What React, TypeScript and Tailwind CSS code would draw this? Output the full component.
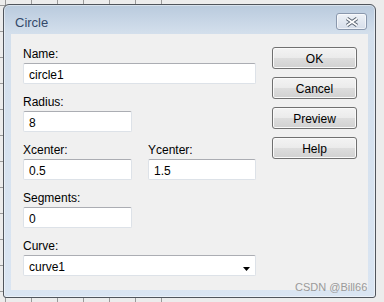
import React from "react";

function TextBox({ value, className }: { value: string; className: string }) {
  return (
    <div
      className={
        "h-[21px] border border-[#dde2e8] border-t-[#abadb3] bg-white rounded-[2px] pl-[5px] pt-[4px] text-[12px] leading-[14px] text-black " +
        className
      }
    >
      {value}
    </div>
  );
}

function Label({ text }: { text: string }) {
  return <div className="h-[14px] text-[12px] leading-[14px] text-black">{text}</div>;
}

function Btn({ text }: { text: string }) {
  return (
    <div className="h-[22px] w-[85px] rounded-[3px] border border-[#707070] bg-[linear-gradient(to_bottom,#f3f3f3_0%,#ebebeb_48%,#dddddd_52%,#d1d1d1_100%)] shadow-[inset_0_0_0_1px_#fafafa] pt-[4px] text-center text-[12px] leading-[14px] text-black">
      {text}
    </div>
  );
}

export default function App() {
  return (
    <div className="relative w-[384px] h-[302px] overflow-hidden bg-[#ececec] pl-[3px] pt-[4px] font-['Liberation_Sans',Arial,sans-serif]">
      <div className="absolute left-0 top-0 h-full w-[172px] bg-[image:linear-gradient(to_right,#9a9a9a_1px,transparent_1px)] bg-[size:26px_26px] bg-[position:5px_0px]" />
      <div className="absolute left-0 top-0 h-full w-[172px] bg-[image:linear-gradient(to_bottom,#9a9a9a_1px,transparent_1px)] bg-[size:26px_26px] bg-[position:0px_5px]" />

      <div className="relative flex h-[294px] w-[373px] flex-col rounded-t-[6px] rounded-b-[3px] border border-[#50555c] bg-[linear-gradient(to_bottom,#b9cadd_0px,#d3dfec_28px,#dae5f2_100%)] shadow-[inset_0_0_0_1px_rgba(255,255,255,0.45)]">
        <div className="flex h-[29px] items-start justify-between pl-[11px] pr-[8px]">
          <span className="mt-[10px] text-[13px] leading-[15px] text-[#34496a]">Circle</span>
          <div className="mt-[8px] flex h-[17px] w-[31px] items-center justify-center rounded-[3px] border border-[#8a98ad] bg-[linear-gradient(to_bottom,#eef2f7,#d6deea)] shadow-[inset_0_0_0_1px_rgba(255,255,255,0.6)]">
            <svg width="14" height="10" viewBox="0 0 14 10">
              <path d="M2 1.5 L12 8.5 M12 1.5 L2 8.5" stroke="#56606e" strokeWidth="3.6" fill="none" />
              <path d="M2 1.5 L12 8.5 M12 1.5 L2 8.5" stroke="#ffffff" strokeWidth="1.7" fill="none" />
            </svg>
          </div>
        </div>

        <div className="mx-[7px] flex h-[256px] bg-[#f0f0f0] pl-[12px] pt-[13px]">
          <div className="flex w-[233px] flex-col">
            <Label text="Name:" />
            <TextBox value="circle1" className="mt-[2px] w-[233px]" />

            <div className="mt-[11px]">
              <Label text="Radius:" />
            </div>
            <TextBox value="8" className="mt-[2px] w-[109px]" />

            <div className="mt-[11px] flex gap-[16px]">
              <div className="flex w-[109px] flex-col">
                <Label text="Xcenter:" />
                <TextBox value="0.5" className="mt-[2px] w-[109px]" />
              </div>
              <div className="flex w-[108px] flex-col">
                <Label text="Ycenter:" />
                <TextBox value="1.5" className="mt-[2px] w-[108px]" />
              </div>
            </div>

            <div className="mt-[11px]">
              <Label text="Segments:" />
            </div>
            <TextBox value="0" className="mt-[2px] w-[109px]" />

            <div className="mt-[11px]">
              <Label text="Curve:" />
            </div>
            <div className="mt-[2px] flex h-[21px] w-[233px] items-start rounded-[2px] border border-[#dde2e8] border-t-[#abadb3] bg-white pl-[5px] pt-[4px] text-[12px] leading-[14px] text-black">
              <span>curve1</span>
              <svg className="ml-auto mr-[5px] mt-[7px]" width="7" height="4" viewBox="0 0 7 4">
                <path d="M0 0 H7 L3.5 4 Z" fill="#000" />
              </svg>
            </div>
          </div>

          <div className="ml-[16px] flex flex-col gap-[8px]">
            <Btn text="OK" />
            <Btn text="Cancel" />
            <Btn text="Preview" />
            <Btn text="Help" />
          </div>
        </div>
      </div>

      <div className="absolute left-[295px] top-[281px] text-[11px] leading-[13px] text-[#9a9a9a]">CSDN @Bill66</div>
    </div>
  );
}
